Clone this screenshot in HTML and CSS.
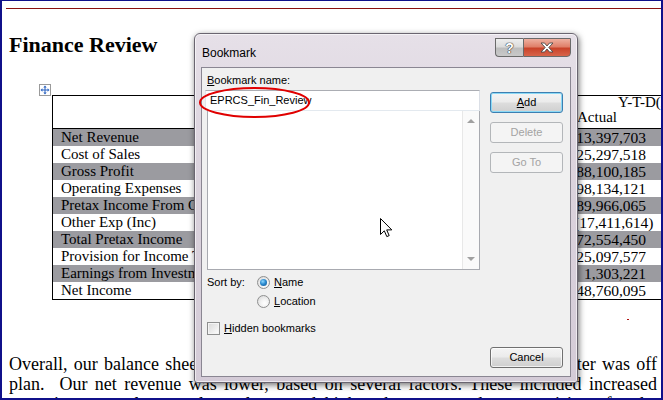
FILE: index.html
```html
<!DOCTYPE html>
<html>
<head>
<meta charset="utf-8">
<link rel="stylesheet" href="styles.css">
</head>
<body>
<div class="page">
  <div class="rule"></div>
  <h1 class="title">Finance Review</h1>
  <div class="table-wrap">
    <span class="move-handle">
      <svg width="10" height="10" viewBox="0 0 10 10"><path d="M5 0.5 L3.3 2.4 H4.5 V4.5 H2.4 V3.3 L0.5 5 L2.4 6.7 V5.5 H4.5 V7.6 H3.3 L5 9.5 L6.7 7.6 H5.5 V5.5 H7.6 V6.7 L9.5 5 L7.6 3.3 V4.5 H5.5 V2.4 H6.7 Z" fill="#2a62c0"/></svg>
    </span>
    <table class="fin">
      <colgroup><col class="c-lab"><col class="c-act"><col class="c-plan"></colgroup>
      <thead>
        <tr class="h1"><th></th><th colspan="2" class="ytd">Y-T-D(Actual vs. Plan)</th></tr>
        <tr class="h2"><th></th><th class="act">Actual</th><th class="act">Plan</th></tr>
      </thead>
      <tbody>
        <tr class="alt"><td class="lab">Net Revenue</td><td class="num">13,397,703</td><td class="num">15,200,000</td></tr>
        <tr><td class="lab">Cost of Sales</td><td class="num">25,297,518</td><td class="num">26,100,000</td></tr>
        <tr class="alt"><td class="lab">Gross Profit</td><td class="num">88,100,185</td><td class="num">89,100,000</td></tr>
        <tr><td class="lab">Operating Expenses</td><td class="num">98,134,121</td><td class="num">97,000,000</td></tr>
        <tr class="alt"><td class="lab">Pretax Income From Operations</td><td class="num">89,966,065</td><td class="num">92,100,000</td></tr>
        <tr><td class="lab">Other Exp (Inc)</td><td class="num">(17,411,614)</td><td class="num">(16,000,000)</td></tr>
        <tr class="alt"><td class="lab">Total Pretax Income</td><td class="num">72,554,450</td><td class="num">76,100,000</td></tr>
        <tr><td class="lab">Provision for Income Taxes</td><td class="num">25,097,577</td><td class="num">26,600,000</td></tr>
        <tr class="alt"><td class="lab">Earnings from Investments</td><td class="num">1,303,221</td><td class="num">1,200,000</td></tr>
        <tr><td class="lab">Net Income</td><td class="num">48,760,095</td><td class="num">50,700,000</td></tr>
      </tbody>
    </table>
  </div>
  <div class="para">
    <p class="line">Overall, our balance sheet indicates that our performance for this fiscal quarter was off</p>
    <p class="line">plan.&nbsp; Our net revenue was lower, based on several factors. These included increased</p>
    <p class="line">operating costs, lower sales volume and higher than expected tax provisions for the period.</p>
  </div>
</div>

<span class="speck"></span>

<div class="dialog">
  <div class="titlebar">
    <span class="title-text">Bookmark</span>
    <div class="caps">
      <span class="cap cap-help">?</span>
      <span class="cap cap-close">
        <svg width="14" height="11" viewBox="0 0 14 11"><path d="M1 1 H4.5 L7 4 L9.5 1 H13 L8.8 5.5 L13 10 H9.5 L7 7 L4.5 10 H1 L5.2 5.5 Z" fill="#fff" stroke="#4a4a4a" stroke-width="0.9" stroke-linejoin="round"/></svg>
      </span>
    </div>
  </div>
  <div class="client">
    <div class="left">
      <div class="label"><u>B</u>ookmark name:</div>
      <div class="input">EPRCS_Fin_Review</div>
      <div class="list">
        <div class="sb"><span class="arr up"></span><span class="arr down"></span></div>
      </div>
      <div class="opt sort">
        <span class="sort-lbl">Sort by:</span>
        <span class="radio on"></span><span class="opt-txt"><u>N</u>ame</span>
      </div>
      <div class="opt loc">
        <span class="radio"></span><span class="opt-txt"><u>L</u>ocation</span>
      </div>
      <div class="opt chk-row">
        <span class="check"></span><span class="chk-txt"><u>H</u>idden bookmarks</span>
      </div>
    </div>
    <div class="right">
      <span class="btn default"><u>A</u>dd</span>
      <span class="btn disabled">Delete</span>
      <span class="btn disabled">Go To</span>
      <span class="btn cancel">Cancel</span>
    </div>
  </div>
</div>

<svg class="ring" width="114" height="34" viewBox="0 0 114 34"><ellipse cx="56.5" cy="16.5" rx="54.5" ry="14.5" fill="none" stroke="#e00000" stroke-width="2"/></svg>

<svg class="cursor" width="13" height="20" viewBox="0 0 13 20"><path d="M0.5 0.5 V16.5 L4.3 12.8 L6.8 18.6 L9.2 17.6 L6.7 11.9 H11.8 Z" fill="#fff" stroke="#000" stroke-width="1" stroke-linejoin="miter"/></svg>
</body>
</html>
```
FILE: styles.css
```css
html, body {
  margin: 0;
  padding: 0;
}
body {
  width: 663px;
  height: 400px;
  overflow: hidden;
  position: relative;
  background: #fff;
}
.page {
  box-sizing: border-box;
  width: 663px;
  height: 400px;
  border: 2px solid #10108a;
  border-top-width: 1px;
  overflow: hidden;
  background: #fff;
  font-family: "Liberation Serif", "Times New Roman", serif;
  color: #000;
}
.rule {
  height: 1px;
  background: #8a1010;
  margin: 7px 0 0 4px;
}
.title {
  margin: 23px 0 0 7px;
  font-size: 22px;
  line-height: 26px;
  font-weight: bold;
}
.table-wrap {
  position: relative;
  margin: 37px 0 0 50px;
  width: max-content;
}
.move-handle {
  position: absolute;
  left: -13px;
  top: -11px;
  width: 10px;
  height: 10px;
  border: 1px solid #9a9a9a;
  background: #fff;
  display: flex;
}
.fin {
  border-collapse: separate;
  border-spacing: 0;
  table-layout: fixed;
  width: 690px;
  border-top: 1px solid #000;
  border-left: 1px solid #000;
  border-bottom: 1px solid #000;
  font-size: 15px;
}
.c-lab { width: 521px; }
.c-act { width: 96px; }
.c-plan { width: 72px; }
.fin th {
  padding: 0;
  font-weight: normal;
  text-align: left;
}
.h1 th {
  height: 13px;
  line-height: 13px;
}
.ytd {
  padding-left: 44px !important;
  white-space: nowrap;
}
.h2 th {
  line-height: 17px;
  padding-bottom: 2px;
  border-bottom: 1px solid #000;
}
.act {
  padding-left: 3px !important;
}
.fin td {
  padding: 0;
  height: 17px;
  line-height: 17px;
  white-space: nowrap;
}
.fin tr.alt td {
  background: #9b9ba0;
}
.lab {
  padding-left: 8px !important;
}
.num {
  text-align: right;
  font-size: 15.5px;
  padding-right: 24px !important;
}
.para {
  margin: 54px 4px 0 7px;
  font-size: 18px;
  line-height: 20px;
}
.line {
  margin: 0;
  text-align: justify;
  text-align-last: justify;
}
.speck {
  position: absolute;
  left: 627px;
  top: 319px;
  width: 2px;
  height: 1px;
  background: #b01010;
}

/* dialog */
.dialog {
  position: absolute;
  left: 194px;
  top: 33px;
  width: 384px;
  height: 350px;
  box-sizing: border-box;
  border: 1px solid #6a6570;
  border-radius: 6px 6px 3px 3px;
  background: linear-gradient(180deg, #e6e0e8 0%, #dcd4de 35%, #d4cbd7 100%);
  box-shadow: 1px 2px 6px rgba(0, 0, 0, 0.55), inset 0 0 0 1px rgba(255, 255, 255, 0.6);
  display: flex;
  flex-direction: column;
  padding: 0 6px 5px 6px;
  font-family: "Liberation Sans", Arial, sans-serif;
  font-size: 11px;
  color: #000;
}
.titlebar {
  height: 33px;
  flex: none;
  display: flex;
  align-items: flex-start;
}
.title-text {
  margin: 12px 0 0 1px;
  font-size: 12px;
  line-height: 14px;
  color: #000;
}
.caps {
  margin: 4px 0 0 auto;
  display: flex;
}
.cap {
  box-sizing: border-box;
  height: 19px;
  display: flex;
  align-items: center;
  justify-content: center;
  border: 1px solid #6a6a6a;
}
.cap-help {
  width: 28px;
  border-right: none;
  border-radius: 0 0 0 4px;
  background: linear-gradient(180deg, #eeeeee 0%, #dcdcdc 45%, #bdbdbd 55%, #c9c9c9 100%);
  font-family: "Liberation Sans", Arial, sans-serif;
  font-size: 14px;
  font-weight: bold;
  color: #fff;
  text-shadow: 0 0 1px #333, 0 0 1px #333, 0 0 1px #333;
}
.cap-close {
  width: 48px;
  border-radius: 0 0 4px 0;
  background: linear-gradient(180deg, #eeb0a0 0%, #e0806a 45%, #c9432a 55%, #d8644a 100%);
}
.client {
  flex: 1;
  display: flex;
  border: 1px solid #8a8692;
  background: #f0f0f0;
}
.left {
  width: 275px;
  margin-left: 3px;
  display: flex;
  flex-direction: column;
}
.label {
  padding: 5px 0 0 2px;
  line-height: 14px;
  margin-bottom: 3px;
}
.input {
  box-sizing: border-box;
  height: 21px;
  border: 1px solid;
  border-color: #abadb3 #dbdfe6 #e3e9ef #e2e3ea;
  background: #fff;
  padding-left: 4px;
  line-height: 19px;
}
.list {
  box-sizing: border-box;
  height: 159px;
  margin-left: 2px;
  border: 1px solid #a8aab0;
  border-top: none;
  background: #fff;
  display: flex;
  justify-content: flex-end;
}
.sb {
  width: 16px;
  border-left: 1px solid #e8e8e8;
  background: #fafafa;
  display: flex;
  flex-direction: column;
  justify-content: space-between;
  align-items: center;
  padding: 8px 0 8px;
}
.arr {
  width: 0;
  height: 0;
  border-left: 4px solid transparent;
  border-right: 4px solid transparent;
}
.arr.up { border-bottom: 4px solid #a0a0a0; }
.arr.down { border-top: 4px solid #a0a0a0; }
.opt {
  display: flex;
  align-items: center;
  height: 13px;
  line-height: 13px;
}
.sort {
  margin-top: 6px;
  padding-left: 2px;
}
.sort-lbl {
  width: 50px;
  flex: none;
}
.loc {
  margin-top: 6px;
  padding-left: 52px;
}
.chk-row {
  margin-top: 14px;
  padding-left: 2px;
}
.radio {
  position: relative;
  flex: none;
  width: 13px;
  height: 13px;
  box-sizing: border-box;
  border-radius: 50%;
  border: 1px solid #8e8f8f;
  background: radial-gradient(circle at 60% 65%, #ffffff 0%, #f2f2f2 40%, #d2d2d2 100%);
}
.radio.on::after {
  content: "";
  position: absolute;
  left: 2px;
  top: 2px;
  width: 7px;
  height: 7px;
  border-radius: 50%;
  background: radial-gradient(circle at 40% 35%, #8fd8ff 0%, #2b8bd0 45%, #0f4f8a 100%);
}
.opt-txt {
  margin-left: 4px;
}
.check {
  flex: none;
  width: 13px;
  height: 13px;
  box-sizing: border-box;
  border: 1px solid #8e8f8f;
  background: linear-gradient(135deg, #d8d8d8 0%, #ececec 55%, #ffffff 100%);
  box-shadow: inset 0 0 0 1px #f4f4f4;
}
.chk-txt {
  margin-left: 4px;
}
.right {
  margin-left: 10px;
  width: 73px;
  display: flex;
  flex-direction: column;
  gap: 9px;
  padding: 24px 0 8px;
}
.btn {
  box-sizing: border-box;
  height: 21px;
  border: 1px solid #707070;
  border-radius: 3px;
  background: linear-gradient(180deg, #f4f4f4 0%, #ebebeb 48%, #dddddd 52%, #cfcfcf 100%);
  box-shadow: inset 0 0 0 1px rgba(255, 255, 255, 0.7);
  text-align: center;
  line-height: 19px;
}
.btn.default {
  border-color: #3c7fb1;
  box-shadow: inset 0 0 0 1px #8ad9f6;
}
.btn.disabled {
  border-color: #b3b6b9;
  background: #f4f4f4;
  box-shadow: none;
  color: #a3a3a3;
}
.btn.cancel {
  margin-top: auto;
}
.ring {
  position: absolute;
  left: 198px;
  top: 86px;
}
.cursor {
  position: absolute;
  left: 380px;
  top: 218px;
}
```
